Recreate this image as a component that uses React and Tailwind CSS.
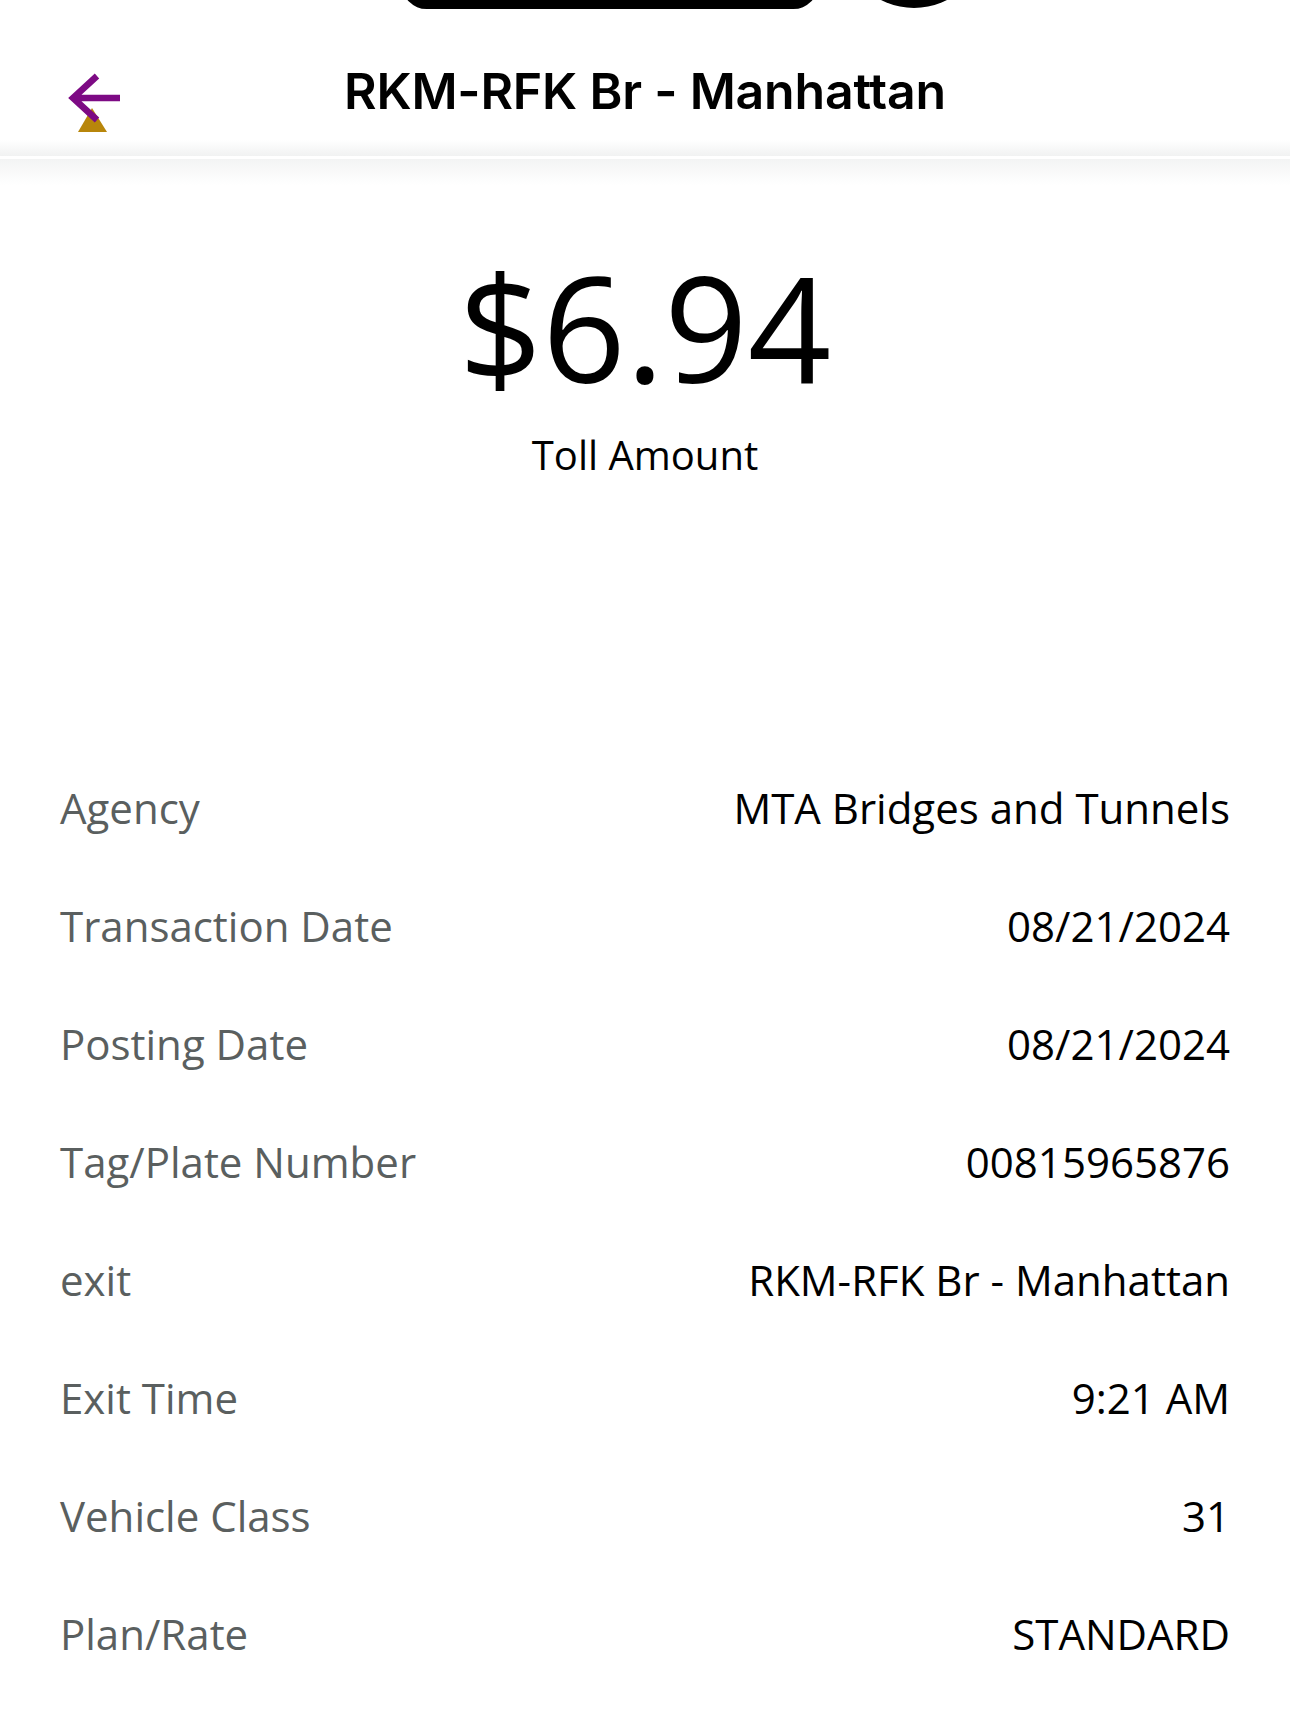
export default function App() {
  const rows = [
    ["Agency", "MTA Bridges and Tunnels"],
    ["Transaction Date", "08/21/2024"],
    ["Posting Date", "08/21/2024"],
    ["Tag/Plate Number", "00815965876"],
    ["exit", "RKM-RFK Br - Manhattan"],
    ["Exit Time", "9:21 AM"],
    ["Vehicle Class", "31"],
    ["Plan/Rate", "STANDARD"],
  ];
  return (
    <div className="relative w-[1290px] h-[1719px] bg-white overflow-hidden" style={{ fontFamily: '"Open Sans", sans-serif' }}>
      {/* status overlay shapes */}
      <div className="absolute left-[402px] top-[-40px] w-[416px] h-[49px] rounded-[45px] bg-black" />
      <div className="absolute left-[842px] top-[-136px] w-[144px] h-[144px] rounded-full bg-black" />

      {/* header */}
      <div className="h-[140px] bg-white pt-[46px]">
        <div className="grid grid-cols-[1fr_auto_1fr] items-center h-[60px]">
          <div className="self-start pl-[60px] pt-[24px]">
            <svg width="70" height="66" viewBox="0 0 70 66" className="block">
              <polygon points="32,38 18,62 47,62" fill="#b8860b" />
              <path d="M37 6 L13 28 L37 50 M13 28 L60 28" stroke="#7d0a84" strokeWidth="6.5" fill="none" strokeLinejoin="miter" />
            </svg>
          </div>
          <div className="text-[50px] font-semibold text-black leading-none tracking-[-0.2px]" style={{ fontFamily: 'Inter, sans-serif' }}>
            RKM-RFK Br - Manhattan
          </div>
          <div />
        </div>
      </div>
      <div className="h-[16px] bg-gradient-to-b from-white to-[#f1f2f2]" />
      <div className="h-[3px] bg-white" />
      <div className="h-[26px] bg-gradient-to-b from-[#f3f4f4] to-white" />

      {/* amount */}
      <div className="flex flex-col items-center pt-[69px]">
        <div className="text-[146px] leading-none text-black">$6.94</div>
        <div className="mt-[35px] text-[40px] leading-none text-black">Toll Amount</div>
      </div>

      {/* rows */}
      <div className="mt-[274px] pl-[60px] pr-[60px]">
        {rows.map(([k, v]) => (
          <div key={k} className="flex justify-between items-center h-[118px] text-[42px] leading-[118px]">
            <span className="text-[#5a5f5f]">{k}</span>
            <span className="text-black">{v}</span>
          </div>
        ))}
      </div>
    </div>
  );
}
